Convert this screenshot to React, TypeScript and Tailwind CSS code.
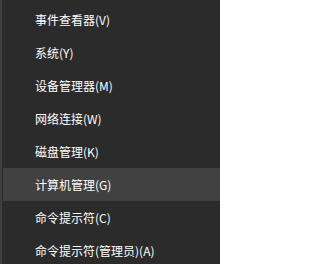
const items = [
  '事件查看器(V)',
  '系统(Y)',
  '设备管理器(M)',
  '网络连接(W)',
  '磁盘管理(K)',
  '计算机管理(G)',
  '命令提示符(C)',
  '命令提示符(管理员)(A)',
];

export default function App() {
  return (
    <div className="w-[220px] h-[264px] overflow-hidden bg-[#2b2b2b] border-l-2 border-[#3f3f3f] pl-px pt-[3px] text-white text-[12px] font-['Segoe_UI','Noto_Sans_CJK_SC',sans-serif]">
      {items.map((label, i) => (
        <div
          key={label}
          className={`h-[33px] flex items-center pl-[32px] ${i === 5 ? 'bg-[#414141]' : ''}`}
        >
          {label}
        </div>
      ))}
    </div>
  );
}
